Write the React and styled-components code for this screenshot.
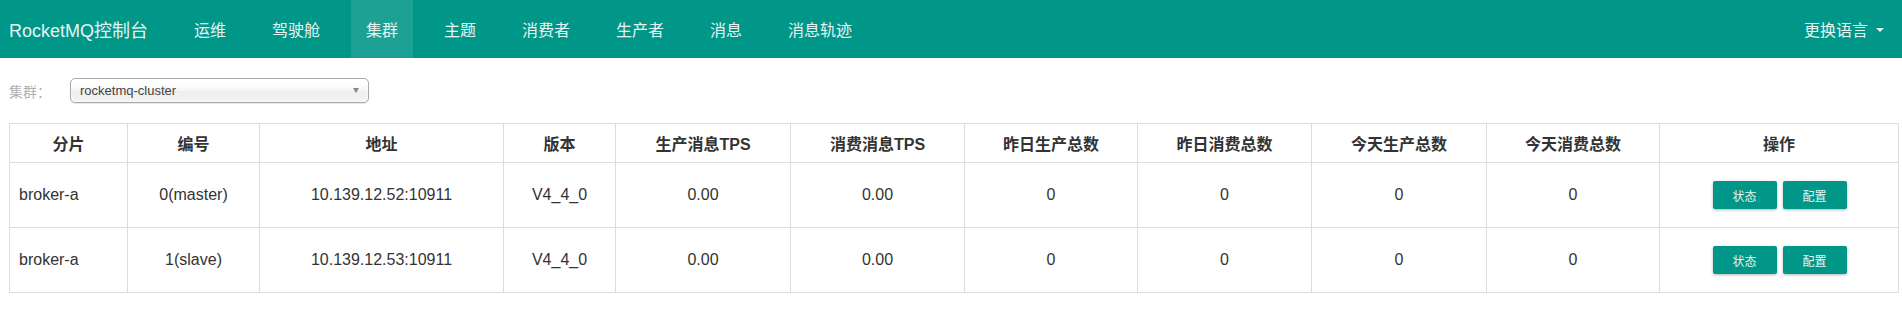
import styled, { createGlobalStyle } from 'styled-components';

const GlobalStyle = createGlobalStyle`
  body {
    margin: 0;
    background: #fff;
    font-family: "Liberation Sans", "Noto Sans CJK SC", sans-serif;
    font-size: 14px;
    color: #333;
  }
`;

const navItems = ["运维", "驾驶舱", "集群", "主题", "消费者", "生产者", "消息", "消息轨迹"];

const columns = [
  { title: "分片", width: 118 },
  { title: "编号", width: 132 },
  { title: "地址", width: 244 },
  { title: "版本", width: 112 },
  { title: "生产消息TPS", width: 175 },
  { title: "消费消息TPS", width: 174 },
  { title: "昨日生产总数", width: 173 },
  { title: "昨日消费总数", width: 174 },
  { title: "今天生产总数", width: 175 },
  { title: "今天消费总数", width: 173 },
  { title: "操作", width: 239 },
];

const brokers = [
  { name: "broker-a", id: "0(master)", addr: "10.139.12.52:10911", version: "V4_4_0" },
  { name: "broker-a", id: "1(slave)", addr: "10.139.12.53:10911", version: "V4_4_0" },
];

export default function App() {
  return (
    <>
      <GlobalStyle />
      <NavBar>
        <Brand>RocketMQ控制台</Brand>
        <NavList>
          {navItems.map((item) => (
            <NavItem key={item} $active={item === "集群"}>
              {item}
            </NavItem>
          ))}
        </NavList>
        <LangMenu>
          更换语言
          <Caret />
        </LangMenu>
      </NavBar>

      <Content>
        <FilterRow>
          <FilterLabel>集群：</FilterLabel>
          <Select>
            <SelectText>rocketmq-cluster</SelectText>
            <SelectArrow />
          </Select>
        </FilterRow>

        <Table>
          <colgroup>
            {columns.map((c) => (
              <col key={c.title} style={{ width: c.width }} />
            ))}
          </colgroup>
          <thead>
            <tr>
              {columns.map((c) => (
                <Th key={c.title}>{c.title}</Th>
              ))}
            </tr>
          </thead>
          <tbody>
            {brokers.map((b) => (
              <tr key={b.addr}>
                <Td $left>{b.name}</Td>
                <Td>{b.id}</Td>
                <Td>{b.addr}</Td>
                <Td>{b.version}</Td>
                <Td>0.00</Td>
                <Td>0.00</Td>
                <Td>0</Td>
                <Td>0</Td>
                <Td>0</Td>
                <Td>0</Td>
                <Td>
                  <Actions>
                    <ActionButton>状态</ActionButton>
                    <ActionButton>配置</ActionButton>
                  </Actions>
                </Td>
              </tr>
            ))}
          </tbody>
        </Table>
      </Content>
    </>
  );
}

const NavBar = styled.div`
  display: flex;
  align-items: stretch;
  height: 58px;
  background: #009688;
  color: #e6f4f2;
`;

const Brand = styled.div`
  display: flex;
  align-items: center;
  padding: 0 0 0 9px;
  width: 170px;
  font-size: 18px;
  color: #e6f4f2;
`;

const NavList = styled.ul`
  display: flex;
  list-style: none;
  margin: 0;
  padding: 0;
  flex: 1;
`;

const NavItem = styled.li`
  display: flex;
  align-items: center;
  padding: 0 15px;
  margin-right: 16px;
  font-size: 16px;
  color: #e6f4f2;
  background: ${(p) => (p.$active ? "#1ea195" : "transparent")};
`;

const LangMenu = styled.div`
  display: flex;
  align-items: center;
  padding-right: 18px;
  font-size: 16px;
  color: #e6f4f2;
`;

const Caret = styled.span`
  display: inline-block;
  margin-left: 8px;
  margin-top: 2px;
  width: 0;
  height: 0;
  border-top: 4px solid #e6f4f2;
  border-left: 4px solid transparent;
  border-right: 4px solid transparent;
`;

const Content = styled.div`
  padding: 20px 4px 0 9px;
`;

const FilterRow = styled.div`
  display: flex;
  align-items: center;
  height: 25px;
  margin-bottom: 20px;
`;

const FilterLabel = styled.label`
  width: 61px;
  font-size: 14px;
  color: #b0b0b0;
`;

const Select = styled.div`
  box-sizing: border-box;
  display: flex;
  align-items: center;
  width: 299px;
  height: 25px;
  padding: 0 9px 0 9px;
  border: 1px solid #aaa;
  border-radius: 5px;
  background: linear-gradient(#fff 20%, #f6f6f6 50%, #eee 52%, #f4f4f4 100%);
  box-shadow: inset 0 0 3px #fff, 0 1px 1px rgba(0, 0, 0, 0.1);
`;

const SelectText = styled.span`
  flex: 1;
  font-size: 13px;
  color: #444;
`;

const SelectArrow = styled.span`
  width: 0;
  height: 0;
  border-top: 5px solid #888;
  border-left: 3px solid transparent;
  border-right: 3px solid transparent;
`;

const Table = styled.table`
  width: 1889px;
  table-layout: fixed;
  border-collapse: collapse;
  border: 1px solid #ddd;
`;

const Th = styled.th`
  height: 38px;
  padding: 0 8px;
  border: 1px solid #ddd;
  font-size: 16px;
  font-weight: bold;
  color: #333;
  text-align: center;
  vertical-align: middle;
`;

const Td = styled.td`
  height: 64px;
  padding: 0 8px 0 ${(p) => (p.$left ? "9px" : "8px")};
  border: 1px solid #ddd;
  font-size: 16px;
  color: #333;
  text-align: ${(p) => (p.$left ? "left" : "center")};
  vertical-align: middle;
`;

const Actions = styled.div`
  display: flex;
  justify-content: center;
  gap: 6px;
  padding-left: 1px;
`;

const ActionButton = styled.button`
  width: 64px;
  height: 28px;
  padding: 0;
  border: none;
  border-radius: 2px;
  background: #009688;
  color: #e6f4f2;
  font-family: "Liberation Sans", "Noto Sans CJK SC", sans-serif;
  font-size: 12px;
  box-shadow: 0 1px 3px rgba(0, 0, 0, 0.3);
`;
